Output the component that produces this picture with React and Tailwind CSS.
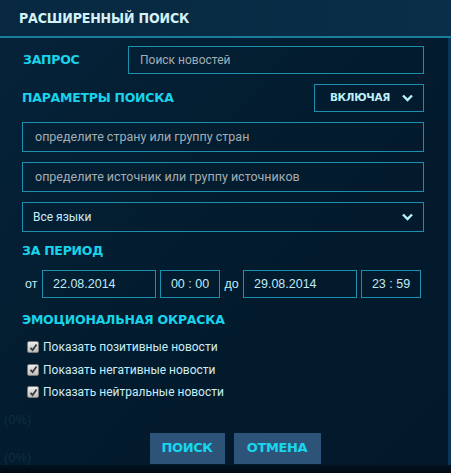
import React from "react";

const H = "font-['DejaVu_Sans',sans-serif] font-bold uppercase text-[#19d3ea] tracking-[-0.02em]";

function Chevron({ className = "" }) {
  return (
    <svg width="11" height="8" viewBox="0 0 11 8" className={className}>
      <path d="M1 1.5 L5.5 6 L10 1.5" fill="none" stroke="#b8f2fb" strokeWidth="2.4" />
    </svg>
  );
}

function Check({ label }) {
  return (
    <div className="flex items-center h-[22.5px] gap-[4px]">
      <div className="w-[12px] h-[12px] rounded-[2px] bg-gradient-to-b from-[#eeeeee] to-[#bdbdbd] border border-[#7a7a7a] flex items-center justify-center">
        <svg width="9" height="9" viewBox="0 0 9 9">
          <path d="M1.5 4.8 L3.6 7 L7.6 1.5" fill="none" stroke="#3a3a3a" strokeWidth="1.8" />
        </svg>
      </div>
      <span className="text-[12px] text-[#c9eef7] font-['Roboto',sans-serif]">{label}</span>
    </div>
  );
}

export default function App() {
  return (
    <div className="w-[451px] h-[473px] relative overflow-hidden bg-gradient-to-br from-[#05233a] via-[#031b2e] to-[#03192b] font-['Roboto',sans-serif]">
      <div className="absolute left-[4px] top-[410px] text-[13px] text-[#0e2e41] font-['Liberation_Sans',sans-serif]">(0%)</div>
      <div className="absolute left-[4px] top-[448px] text-[13px] text-[#0e2e41] font-['Liberation_Sans',sans-serif]">(0%)</div>
      <div className="absolute right-0 top-0 bottom-0 w-[3px] bg-[#0b3458]" />
      <div className="absolute left-0 right-0 bottom-0 h-[8px] bg-gradient-to-b from-[#021220] to-[#010a14]" />

      <div className="relative">
        <div className="h-[36px] bg-gradient-to-r from-[#072840] to-[#0a2e48] flex items-center pl-[19px]">
          <span className="font-['DejaVu_Sans_Condensed','DejaVu_Sans',sans-serif] font-bold text-[14px] text-[#d4f1f8] tracking-[-0.01em] uppercase">Расширенный поиск</span>
        </div>
        <div className="h-[2px] bg-[#1b7c9c]" />

        <div className="px-[22px] pr-[27px]">
          <div className="flex items-center mt-[8px] h-[28px]">
            <span className={`${H} text-[12.5px] w-[106px] pl-[1px]`}>Запрос</span>
            <div className="flex-1 h-[28px] border border-[#1a8fae] flex items-center px-[11px] text-[12px] text-[#a2aeb3]">Поиск новостей</div>
          </div>

          <div className="flex items-center justify-between mt-[10px] h-[28px]">
            <span className={`${H} text-[12.5px]`}>Параметры поиска</span>
            <div className="w-[110px] h-[28px] border border-[#1a8fae] flex items-center justify-end pr-[10px] gap-[12px]">
              <span className="font-['DejaVu_Sans',sans-serif] font-bold text-[10.5px] text-[#bdf0fa] uppercase tracking-[-0.03em]">Включая</span>
              <Chevron />
            </div>
          </div>

          <div className="mt-[10px] h-[30px] border border-[#1a8fae] flex items-center px-[12px] text-[12.5px] text-[#a2aeb3]">определите страну или группу стран</div>
          <div className="mt-[10px] h-[30px] border border-[#1a8fae] flex items-center px-[12px] text-[12.5px] text-[#a2aeb3]">определите источник или группу источников</div>
          <div className="mt-[10px] h-[30px] border border-[#1a8fae] flex items-center justify-between pl-[10px] pr-[10px] text-[12px] text-[#c6eef8]">
            <span>Все языки</span>
            <Chevron />
          </div>

          <div className={`${H} text-[12.5px] mt-[10px] h-[18px] flex items-center`}>За период</div>

          <div className="flex items-center mt-[10px] h-[28px] font-['Liberation_Sans',sans-serif] text-[12.5px] text-[#bfeaf6]">
            <span className="w-[20px] pl-[3px]">от</span>
            <div className="w-[114px] h-[28px] border border-[#1a8fae] flex items-center pl-[10px]">22.08.2014</div>
            <div className="ml-[4px] w-[60px] h-[28px] border border-[#1a8fae] flex items-center justify-center">00 : 00</div>
            <span className="w-[23px] text-center">до</span>
            <div className="w-[114px] h-[28px] border border-[#1a8fae] flex items-center pl-[10px]">29.08.2014</div>
            <div className="ml-[4px] w-[60px] h-[28px] border border-[#1a8fae] flex items-center justify-center">23 : 59</div>
          </div>

          <div className={`${H} text-[12.5px] mt-[13px] h-[18px] flex items-center`}>Эмоциональная окраска</div>

          <div className="mt-[7px] pl-[5px] flex flex-col">
            <Check label="Показать позитивные новости" />
            <Check label="Показать негативные новости" />
            <Check label="Показать нейтральные новости" />
          </div>

          <div className="flex justify-center gap-[9px] mt-[29px] pl-[24px]">
            <div className="w-[75px] h-[31px] bg-[#2d5378] flex items-center justify-center font-['DejaVu_Sans',sans-serif] font-bold text-[13px] text-[#18d6ee] tracking-[-0.03em]">ПОИСК</div>
            <div className="w-[87px] h-[31px] bg-[#2d5378] flex items-center justify-center font-['DejaVu_Sans',sans-serif] font-bold text-[13px] text-[#18d6ee] tracking-[-0.03em]">ОТМЕНА</div>
          </div>
        </div>
      </div>
    </div>
  );
}
